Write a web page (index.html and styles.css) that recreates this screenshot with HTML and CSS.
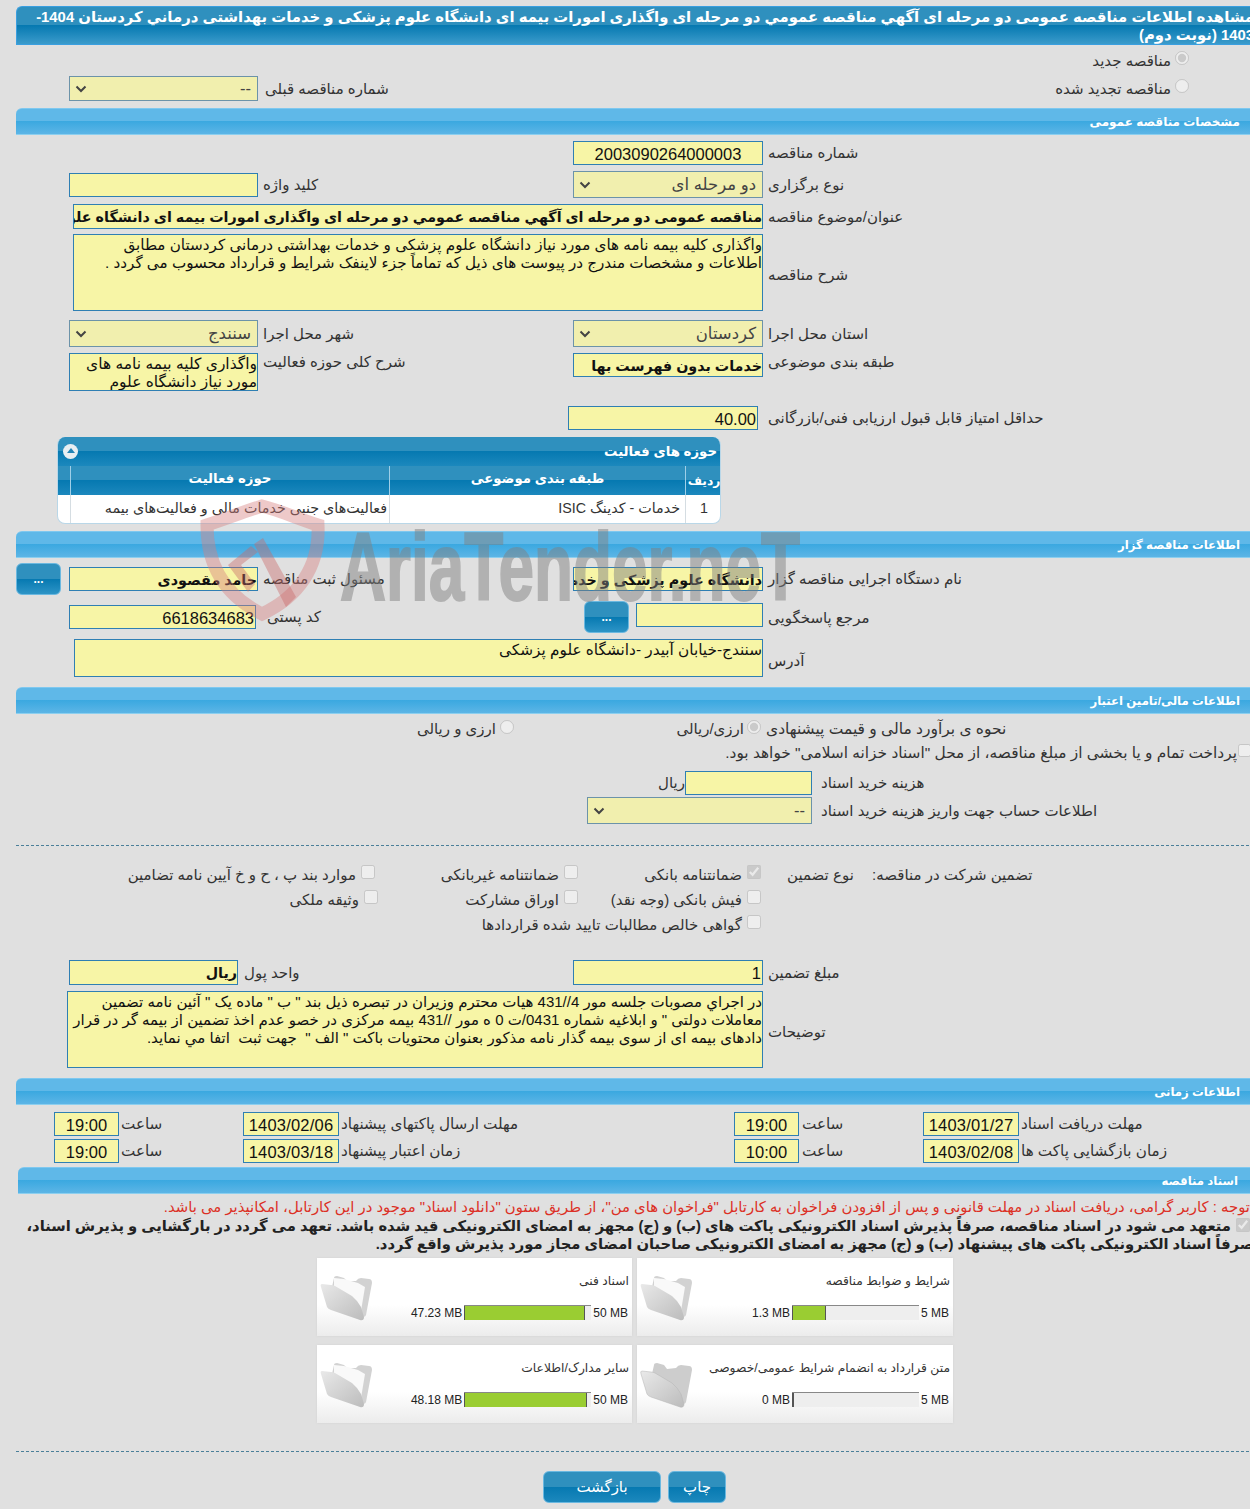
FILE: index.html
```html
<!DOCTYPE html>
<html lang="fa">
<head>
<meta charset="utf-8">
<title>مشاهده اطلاعات مناقصه</title>
<link rel="stylesheet" href="styles.css">
</head>
<body>
<svg width="0" height="0" class="defs">
  <defs>
    <linearGradient id="fg" x1="0" y1="0" x2="1" y2="1"><stop offset="0" stop-color="#e9e9e9"/><stop offset="1" stop-color="#bcbcbc"/></linearGradient>
    <symbol id="folder" viewBox="0 0 52 46">
      <path d="M14 3Q14 1 17 1L24 3 27 6 36 6Q38 3 41 3L49 4Q52 4 52 8L46 40Q45 43 42 41L12 12z" fill="#d2d2d2"/>
      <path d="M14 3L24 4 38 8 45 12 41 36 14 12z" fill="#f9f9f9"/>
      <path d="M2 9Q0 9 1 12L7 32Q8 34 11 35L40 45Q44 46 44 42L41 32Q38 26 32 21L15 11Q13 10 11 10z" fill="url(#fg)"/>
    </symbol>
    <symbol id="folder-empty" viewBox="0 0 52 46">
      <path d="M14 3Q14 1 17 1L24 3 27 7 36 6Q38 3 41 3L49 4Q52 4 52 8L46 40Q45 43 42 41L12 12z" fill="#cdcdcd"/>
      <path d="M2 9Q0 9 1 12L7 32Q8 34 11 35L40 45Q44 46 44 42L41 32Q38 26 32 21L15 11Q13 10 11 10z" fill="url(#fg)" stroke="#b4b4b4" stroke-width=".5"/>
    </symbol>
    <symbol id="chev" viewBox="0 0 12 8"><path d="M1.500 1.500L6 6l4.500-4.500" fill="none" stroke="#444" stroke-width="2"/></symbol>
  </defs>
</svg>
<div class="page">
  <h1 class="page-title">مشاهده اطلاعات مناقصه عمومی دو مرحله ای آگهي مناقصه عمومي دو مرحله ای واگذاری امورات بیمه ای دانشگاه علوم پزشکی و خدمات بهداشتی درماني کردستان 1404- 1403 (نوبت دوم)</h1>

  <div class="radio-line r-new"><input type="radio" name="k" checked disabled><span>مناقصه جدید</span></div>
  <div class="row r-renew">
    <div class="cell"><div class="select w189"><span>--</span><svg class="chev"><use href="#chev"/></svg></div><label class="lbl gap7">شماره مناقصه قبلی</label></div>
    <div class="radio-line end"><input type="radio" name="k" disabled><span>مناقصه تجدید شده</span></div>
  </div>

  <h2 class="bar b1">مشخصات مناقصه عمومی</h2>

  <div class="row r-num">
    <div class="cell"></div>
    <div class="cell"><div class="field w190 h24 num center">2003090264000003</div><label class="lbl">شماره مناقصه</label></div>
  </div>
  <div class="row r-type">
    <div class="cell"><div class="field w189 h24"></div><label class="lbl">کلید واژه</label></div>
    <div class="cell"><div class="select w190 h27"><span>دو مرحله ای</span><svg class="chev"><use href="#chev"/></svg></div><label class="lbl">نوع برگزاری</label></div>
  </div>
  <div class="row r-title">
    <div class="wide-cell"><div class="field long bold">مناقصه عمومی دو مرحله ای آگهي مناقصه عمومي دو مرحله ای واگذاری امورات بیمه ای دانشگاه علوم پزشکی و خدمات</div><label class="lbl">عنوان/موضوع مناقصه</label></div>
  </div>
  <div class="row r-desc">
    <div class="wide-cell"><div class="area long h77 fs152">واگذاری کلیه بیمه نامه های مورد نیاز دانشگاه علوم پزشکی و خدمات بهداشتی درمانی کردستان مطابق اطلاعات و مشخصات مندرج در پیوست های ذیل که تماماً جزء لاینفک شرایط و قرارداد محسوب می گردد .</div><label class="lbl mt4">شرح مناقصه</label></div>
  </div>
  <div class="row r-prov">
    <div class="cell"><div class="select w189 h27"><span>سنندج</span><svg class="chev"><use href="#chev"/></svg></div><label class="lbl">شهر محل اجرا</label></div>
    <div class="cell"><div class="select w190 h27"><span>کردستان</span><svg class="chev"><use href="#chev"/></svg></div><label class="lbl">استان محل اجرا</label></div>
  </div>
  <div class="row r-cat">
    <div class="cell top"><div class="area w189 h38 fs155">واگذاری کلیه بیمه نامه های مورد نیاز دانشگاه علوم</div><label class="lbl">شرح کلی حوزه فعالیت</label></div>
    <div class="cell top"><div class="field w190 h24 bold">خدمات بدون فهرست بها</div><label class="lbl">طبقه بندی موضوعی</label></div>
  </div>
  <div class="row r-score">
    <div class="cell"></div>
    <div class="cell shift"><div class="field w190 h24 num">40.00</div><label class="lbl ml10">حداقل امتیاز قابل قبول ارزیابی فنی/بازرگانی</label></div>
  </div>

  <section class="panel">
    <div class="panel-head"><span class="toggle"></span><span>حوزه های فعالیت</span></div>
    <div class="grid-row grid-head"><div class="c-a"></div><div class="c-b">حوزه فعالیت</div><div class="c-c">طبقه بندی موضوعی</div><div class="c-d">ردیف</div></div>
    <div class="grid-row grid-body"><div class="c-a"></div><div class="c-b">فعالیت‌های جنبی خدمات مالی و فعالیت‌های بیمه</div><div class="c-c">خدمات - کدینگ ISIC</div><div class="c-d">1</div></div>
  </section>

  <h2 class="bar b2">اطلاعات مناقصه گزار</h2>

  <div class="row r-org">
    <div class="cell btn-left"><button class="dots">...</button><div class="field w189 h24 bold">حامد مقصودی</div><label class="lbl">مسئول ثبت مناقصه</label></div>
    <div class="cell"><div class="field w190 h24 bold">دانشگاه علوم پزشکی و خدمات بهداشتی درمانی کردستان</div><label class="lbl">نام دستگاه اجرایی مناقصه گزار</label></div>
  </div>
  <div class="row r-ref">
    <div class="cell low"><div class="field w187 h24 num">6618634683</div><label class="lbl gap11">کد پستی</label></div>
    <div class="cell btn-ref"><button class="dots">...</button><div class="field w127 h24"></div><label class="lbl">مرجع پاسخگویی</label></div>
  </div>
  <div class="row r-addr">
    <div class="wide-cell"><div class="area addr">سنندج-خیابان آبیدر -دانشگاه علوم پزشکی</div><label class="lbl mt6">آدرس</label></div>
  </div>

  <h2 class="bar b3">اطلاعات مالی/تامین اعتبار</h2>

  <div class="row r-method">
    <div class="cell"><div class="radio-line pos-a"><input type="radio" name="m" disabled><span>ارزی و ریالی</span></div></div>
    <div class="cell"><div class="radio-line pos-b"><input type="radio" name="m" checked disabled><span>ارزی/ریالی</span></div><label class="lbl">نحوه ی برآورد مالی و قیمت پیشنهادی</label></div>
  </div>
  <div class="check-line r-treasury"><input type="checkbox" disabled><span>پرداخت تمام و یا بخشی از مبلغ مناقصه، از محل "اسناد خزانه اسلامی" خواهد بود.</span></div>
  <div class="row r-fee">
    <div class="fee-cell"><span class="unit">ریال</span><div class="field w127 h24"></div><label class="lbl gap9">هزینه خرید اسناد</label></div>
  </div>
  <div class="row r-acc">
    <div class="fee-cell acc"><div class="select w225 h27"><span>--</span><svg class="chev"><use href="#chev"/></svg></div><label class="lbl gap9">اطلاعات حساب جهت واریز هزینه خرید اسناد</label></div>
  </div>

  <hr class="dash d1">

  <div class="guar">
    <span class="g-title">تضمین شرکت در مناقصه:</span>
    <span class="g-type">نوع تضمین</span>
    <div class="g-grid">
      <div class="gc c1 g-r1"><input type="checkbox" checked disabled><span>ضمانتنامه بانکی</span></div>
      <div class="gc c2 g-r1"><input type="checkbox" disabled><span>ضمانتنامه غیربانکی</span></div>
      <div class="gc c3 g-r1"><input type="checkbox" disabled><span>موارد بند پ ، ح و خ آیین نامه تضامین</span></div>
      <div class="gc c1 g-r2"><input type="checkbox" disabled><span>فیش بانکی (وجه نقد)</span></div>
      <div class="gc c2 g-r2"><input type="checkbox" disabled><span>اوراق مشارکت</span></div>
      <div class="gc c3b g-r2"><input type="checkbox" disabled><span>وثیقه ملکی</span></div>
      <div class="gc c1 g-r3"><input type="checkbox" disabled><span>گواهی خالص مطالبات تایید شده قراردادها</span></div>
    </div>
  </div>

  <div class="row r-amount">
    <div class="cell"><div class="field w169 h25 bold">ریال</div><label class="lbl gap6">واحد پول</label></div>
    <div class="cell"><div class="field w190 h25 num">1</div><label class="lbl">مبلغ تضمین</label></div>
  </div>
  <div class="row r-note">
    <div class="wide-cell"><div class="area note">در اجراي مصوبات جلسه مور 4//431 هیات محترم وزیران در تبصره ذیل بند " ب " ماده یک " آئین نامه تضمین معاملات دولتی " و ابلاغیه شماره 0431/ت 0 ه مور //431 بیمه مرکزی در خصو عدم اخذ تضمین از بیمه گر در قرار دادهای بیمه ای از سوی بیمه گذار نامه مذکور بعنوان محتویات باکت " الف "  جهت ثبت  اتفا مي نمايد.</div><label class="lbl mt4">توضیحات</label></div>
  </div>

  <h2 class="bar b4">اطلاعات زمانی</h2>

  <div class="times t1">
    <div class="field date-t num center">19:00</div><label class="lbl">ساعت</label>
    <div class="field date-d num center">1403/02/06</div><label class="lbl">مهلت ارسال پاکتهای پیشنهاد</label>
    <div class="field date-t num center">19:00</div><label class="lbl">ساعت</label>
    <div class="field date-d num center">1403/01/27</div><label class="lbl">مهلت دریافت اسناد</label>
  </div>
  <div class="times t2">
    <div class="field date-t num center">19:00</div><label class="lbl">ساعت</label>
    <div class="field date-d num center">1403/03/18</div><label class="lbl">زمان اعتبار پیشنهاد</label>
    <div class="field date-t num center">10:00</div><label class="lbl">ساعت</label>
    <div class="field date-d num center">1403/02/08</div><label class="lbl">زمان بازگشایی پاکت ها</label>
  </div>

  <h2 class="bar b5">اسناد مناقصه</h2>

  <p class="notice">توجه : کاربر گرامی، دریافت اسناد در مهلت قانونی و پس از افزودن فراخوان به کارتابل "فراخوان های من"، از طریق ستون "دانلود اسناد" موجود در این کارتابل، امکانپذیر می باشد.</p>
  <div class="pledge"><input type="checkbox" checked disabled>متعهد می شود در اسناد مناقصه، صرفاً پذیرش اسناد الکترونیکی پاکت های (ب) و (ج) مجهز به امضای الکترونیکی قید شده باشد. تعهد می گردد در بارگشایی و پذیرش اسناد، صرفاً اسناد الکترونیکی پاکت های پیشنهاد (ب) و (ج) مجهز به امضای الکترونیکی صاحبان امضای مجاز مورد پذیرش واقع گردد.</div>

  <div class="cards">
    <div class="card">
      <svg class="folder"><use href="#folder"/></svg>
      <div class="card-body"><div class="card-title">اسناد فنی</div>
        <div class="meter-line"><span>47.23 MB</span><span class="meter"><span class="fill" style="width:95%"></span></span><span>50 MB</span></div></div>
    </div>
    <div class="card">
      <svg class="folder"><use href="#folder"/></svg>
      <div class="card-body"><div class="card-title">شرایط و ضوابط مناقصه</div>
        <div class="meter-line"><span>1.3 MB</span><span class="meter"><span class="fill" style="width:27%"></span></span><span>5 MB</span></div></div>
    </div>
    <div class="card">
      <svg class="folder"><use href="#folder"/></svg>
      <div class="card-body"><div class="card-title">سایر مدارک/اطلاعات</div>
        <div class="meter-line"><span>48.18 MB</span><span class="meter"><span class="fill" style="width:96.400%"></span></span><span>50 MB</span></div></div>
    </div>
    <div class="card">
      <svg class="folder"><use href="#folder-empty"/></svg>
      <div class="card-body"><div class="card-title">متن قرارداد به انضمام شرایط عمومی/خصوصی</div>
        <div class="meter-line"><span>0 MB</span><span class="meter"><span class="fill" style="width:0"></span></span><span>5 MB</span></div></div>
    </div>
  </div>

  <hr class="dash d2">

  <div class="actions"><button class="act back">بازگشت</button><button class="act print">چاپ</button></div>
</div>

<div class="watermark">
  <svg viewBox="0 0 604 130" width="604" height="130">
    <path d="M9 28C30 21 48 14 64 9 84 14 100 22 120 28 122 70 100 100 64 117 30 100 9 72 9 28z" fill="none" stroke="#d77f7f" stroke-width="13" opacity=".42"/>
    <path d="M56 47L65 41 98 100 88 110zM53 49L30 68 50 95 57 87 43 68 60 55z" fill="#c96a6a" opacity=".42"/>
    <text x="142" y="103" textLength="460" lengthAdjust="spacingAndGlyphs" class="wm-text">AriaTender.neT</text>
  </svg>
</div>
</body>
</html>
```
FILE: styles.css
```css
* { box-sizing: border-box; }
html, body { margin: 0; padding: 0; }
body {
  width: 1250px; height: 1509px; overflow: hidden; position: relative;
  background: #e0e0e0; color: #222;
  font-family: "Liberation Sans", "DejaVu Sans", sans-serif; font-size: 15px;
}
.defs { position: absolute; }
.page { width: 1238px; margin-left: 16px; padding-top: 6px; }

.page-title {
  margin: 0; height: 39px; direction: rtl; text-align: right; color: #fff;
  font-size: 14.850px; line-height: 18px; font-weight: bold; padding: 1px 0 0;
  background: linear-gradient(#2f90be 0, #2f90be 50%, #0679b1 50%, #3b9bcb 100%);
  border-top: 1px solid #3a9fe0; border-bottom: 1px solid #3a9fe0; border-left: 1px solid #3a9fe0; border-radius: 6px 0 0 0;
}
.bar {
  margin: 0; height: 27px; direction: rtl; color: #fff; font-size: 11.700px; font-weight: bold;
  line-height: 26px; padding-right: 14px; border-radius: 6px 0 0 0;
  background: linear-gradient(#5fb8e8 0, #5fb8e8 48%, #3aa8e0 48%, #5cb5e6 100%);
  border-top: 1px solid #7fc8ef; border-bottom: 1px solid #8ccfef;
}
.b1 { margin-top: 7px; font-size: 12px; }
.b2 { margin-top: 7px; }
.b3 { margin-top: 10px; }
.b4 { margin-top: 10px; }
.b5 { margin-top: 4px; margin-left: 2px; padding-right: 16px; }

.row { display: grid; grid-template-columns: 504px 1fr; grid-template-rows: minmax(0, 1fr); padding-left: 53px; }
.cell { display: flex; align-items: center; }
.cell.top { align-items: flex-start; }
.cell.low { align-items: flex-end; }
.wide-cell { grid-column: 1 / -1; display: flex; justify-content: flex-end; align-items: center; }
.wide-cell .lbl { width: 486px; }

.lbl { direction: rtl; text-align: left; margin-left: 5px; white-space: nowrap; color: #333; flex: none; }
.gap7 { margin-left: 7px; }
.gap11 { margin-left: 11px; }
.gap9 { margin-left: 9px; }
.gap6 { margin-left: 6px; }
.ml10 { margin-left: 10px; }
.mt4 { margin-top: 4px; }
.mt6 { margin-top: 6px; }

.field, .area, .select {
  background: #f7f5a6; border: 1px solid #2f7fb3; direction: rtl; flex: none;
  color: #111; overflow: hidden; white-space: nowrap;
}
.field { line-height: 24px; }
.h24 { height: 24px; }
.h25 { height: 25px; line-height: 24px; }
.num { font-size: 16.500px; text-align: right; padding-right: 1px; }
.num.center { text-align: center; padding: 0; }
.bold { font-weight: bold; font-size: 14.300px; }
.long { width: 690px; }
.field.long { height: 25px; }
.w127 { width: 127px; }
.w169 { width: 169px; }
.w187 { width: 187px; }
.w189 { width: 189px; }
.w190 { width: 190px; }
.w225 { width: 225px; }
.area { white-space: pre-wrap; line-height: 18px; font-size: 15px; padding: 1px 0 0; }
.fs152 { font-size: 15.200px; }
.fs155 { font-size: 15.500px; }
.h77 { height: 77px; }
.h38 { height: 38px; }

.select {
  height: 25px; display: flex; align-items: center; justify-content: space-between;
  background: #f1efae; border-color: #6c93a9; color: #444; padding: 0 6px 0 5px; font-size: 16.500px;
}
.h27 { height: 27px; }
.chev { width: 12px; height: 8px; }

.radio-line { display: flex; align-items: center; direction: rtl; color: #333; white-space: nowrap; }
.radio-line input, .check-line input, .gc input { margin: 0; flex: none; }
.radio-line input { width: 14px; height: 14px; margin-left: 4px; margin-top: -5px; }
.r-new { height: 25px; padding-right: 65px; margin-top: 3px; }
.r-renew { height: 25px; margin-top: 3px; }
.end { padding-right: 65px; height: 25px; }

.r-num { margin-top: 6px; height: 24px; }
.r-type { margin-top: 6px; height: 27px; }
.r-title { margin-top: 6px; height: 25px; padding-left: 0; }
.r-desc { margin-top: 5px; height: 77px; padding-left: 0; }
.r-prov { margin-top: 9px; height: 27px; }
.r-cat { margin-top: 6px; height: 38px; }
.r-score { margin-top: 15px; height: 24px; }
.shift { margin-left: -5px; }

.panel { width: 664px; margin: 7px 0 0 41px; direction: rtl; border-radius: 8px; overflow: hidden; background: #fff; border: 1px solid #b9d7e8; border-top: 0; height: 87px; }
.panel-head {
  height: 29px; display: flex; justify-content: space-between; align-items: center; color: #fff; font-weight: bold;
  font-size: 13.300px; padding: 0 3px 0 0;
  background: linear-gradient(#2f90be 0, #2f90be 50%, #0679b1 50%, #1c88bd 100%);
}
.panel-head span:last-child { order: -1; }
.toggle { width: 15px; height: 15px; margin-left: 5px; border-radius: 50%; background: #e8eef2; position: relative; }
.toggle::after { content: ""; position: absolute; left: 3.500px; top: 4px; border: 4px solid transparent; border-top: 0; border-bottom: 5px solid #2384b6; }
.grid-row { display: grid; grid-template-columns: 13px 319px 296px 36px; direction: ltr; }
.grid-row > div { direction: rtl; }
.grid-head { height: 29px; color: #fff; font-weight: bold; font-size: 13.300px; background: linear-gradient(#2f90be 0, #2f90be 50%, #0679b1 50%, #1c88bd 100%); }
.grid-head > div { border-right: 1px solid #9fcfe8; text-align: center; line-height: 25px; white-space: nowrap; }
.grid-head .c-d { border-right: 0; padding-top: 3px; font-size: 12.300px; }
.grid-body { height: 29px; line-height: 27px; color: #333; font-size: 14.300px; }
.grid-body > div { border-right: 1px solid #d5dde2; padding-right: 2px; white-space: nowrap; overflow: hidden; }
.grid-body .c-d { border-right: 0; text-align: center; padding: 0; }
.grid-body .c-c { padding-right: 5px; }

.r-org { margin-top: 9px; height: 24px; }
.btn-left { margin-left: -53px; }
.dots {
  width: 45px; height: 32px; border: 1px solid #6ab8e0; border-radius: 6px; color: #fff; padding: 0; flex: none;
  font: bold 12px "Liberation Sans", sans-serif;
  background: linear-gradient(#2f90be 0, #2f90be 50%, #0679b1 50%, #2d94c6 100%);
}
.btn-left .dots { margin-right: 8px; }
.r-ref { margin-top: 12px; height: 26px; }
.low .lbl { margin-bottom: 3px; }
.btn-ref { padding-left: 11px; align-items: flex-start; }
.btn-ref .dots { margin-right: 7px; margin-top: -2px; }
.btn-ref .lbl { margin-top: 6px; }
.r-addr { margin-top: 10px; height: 38px; padding-left: 0; }
.addr { width: 689px; height: 38px; font-size: 15.300px; }

.r-method { margin-top: 6px; height: 18px; }
.pos-a { margin-left: 351px; width: 94px; }
.pos-b { width: 190px; margin-left: -2px; }
.pos-b input { margin-left: 3px; }
.r-method .lbl { font-size: 15.500px; }
.check-line { display: flex; direction: rtl; align-items: center; height: 18px; margin-top: 6px; color: #333; white-space: nowrap; font-size: 15.400px; }
.check-line input { width: 13px; height: 13px; margin-left: 1px; margin-top: -6px; margin-right: 3px; }
.fee-cell { grid-column: 1 / -1; display: flex; align-items: center; padding-left: 592px; }
.r-fee { margin-top: 9px; height: 24px; }
.r-acc { margin-top: 2px; height: 27px; }
.acc { padding-left: 518px; }
.unit { direction: rtl; color: #333; width: 24px; text-align: right; flex: none; }

.dash { height: 0; border: 0; border-top: 1px dashed #4a7f99; margin: 0; }
.d1 { margin-top: 21px; }
.d2 { margin-top: 28px; }

.guar { position: relative; height: 94px; margin-top: 20px; font-size: 15px; }
.g-title { position: absolute; left: 856px; top: 0; direction: rtl; color: #333; white-space: nowrap; }
.g-type { position: absolute; left: 771px; top: 0; direction: rtl; color: #333; white-space: nowrap; }
.g-grid { position: absolute; inset: 0; }
.gc { position: absolute; display: flex; direction: rtl; align-items: center; gap: 5px; color: #333; white-space: nowrap; }
.gc input { width: 14px; height: 14px; margin-top: -6px; }
.c1 { right: 493px; }
.c2 { right: 676px; }
.c3 { right: 879px; }
.c3b { right: 876px; }
.g-r1 { top: 0; }
.g-r2 { top: 25px; }
.g-r3 { top: 50px; }

.r-amount { margin-top: 0; height: 25px; }
.r-note { margin-top: 6px; height: 77px; padding-left: 0; }
.note { width: 696px; height: 77px; }

.times { height: 24px; display: grid; align-items: center; grid-template-columns: 65px 124px 96px 395px 66px 123px 96px 1fr; padding-left: 38px; }
.times .lbl { margin-left: 2px; font-size: 15.200px; }
.t1 { margin-top: 7px; }
.t2 { margin-top: 3px; }
.date-t { width: 65px; height: 24px; }
.date-d { width: 96px; height: 24px; letter-spacing: .2px; }

.notice { margin: 4px 4px 0 0; direction: rtl; color: #dc3026; height: 18px; line-height: 18px; white-space: nowrap; font-size: 14.870px; }
.pledge { direction: rtl; font-weight: bold; color: #222; line-height: 18px; height: 36px; margin: 1px 0 0 -10px; font-size: 14.750px; }
.pledge input { width: 14px; height: 14px; margin: 0 4px 0 5px; vertical-align: -1px; }

.cards { display: grid; grid-template-columns: 315px 316px; gap: 9px 5px; margin: 5px 0 0 301px; }
.card {
  height: 78px; display: flex; padding: 0 3px 0 3px;
  background: linear-gradient(#fff 0, #fff 60%, #ececec 100%);
  box-shadow: 0 0 2px #cfcfcf;
}
.folder { width: 52px; height: 46px; margin-top: 17px; flex: none; }
.card-body { flex: 1; min-width: 0; direction: rtl; font-size: 12.300px; }
.card-title { margin-top: 14px; height: 18px; line-height: 18px; white-space: nowrap; color: #333; }
.meter-line { display: flex; direction: ltr; justify-content: flex-end; align-items: center; margin-top: 15px; gap: 2px; font-size: 12px; color: #222; padding-right: 1px; white-space: nowrap; }
.meter { display: block; width: 127px; height: 15px; background: #eee; border-top: 1px solid #888; position: relative; flex: none; }
.fill { display: block; height: 100%; background: #9acd32; border-right: 1px solid #555; border-left: 1px solid #555; }

.actions { display: flex; gap: 7px; margin: 19px 0 0 527px; }
.act {
  height: 32px; border: 1px solid #6ab8e0; border-radius: 6px; color: #fff; font: 15px "Liberation Sans", "DejaVu Sans", sans-serif;
  background: linear-gradient(#2f90be 0, #2f90be 50%, #0679b1 50%, #1c88bd 100%); padding: 0;
}
.back { width: 118px; }
.print { width: 58px; }

.watermark { position: absolute; left: 198px; top: 497px; width: 604px; height: 130px; pointer-events: none; }
.watermark svg { display: block; }
.wm-text { font: bold 96px "Liberation Sans", sans-serif; fill: #808080; stroke: #808080; stroke-width: 2px; opacity: .48; }
```
